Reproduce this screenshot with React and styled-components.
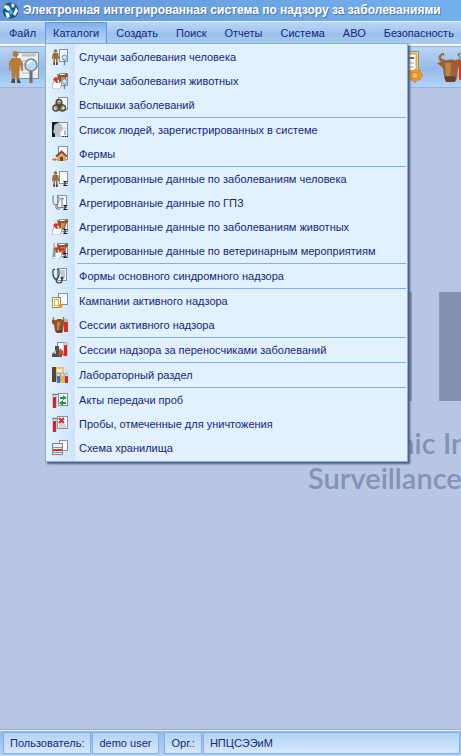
import React from 'react';
import styled, { createGlobalStyle } from 'styled-components';

const GlobalStyle = createGlobalStyle`
  * { box-sizing: border-box; }
  body { margin: 0; background: #b8c6e6; font-family: "Liberation Sans", Arial, sans-serif; font-size: 11px; color: #14287c; }
  button { font: inherit; color: inherit; margin: 0; }
`;

const Window = styled.div`
  display: flex;
  flex-direction: column;
  min-height: 100vh;
  overflow: hidden;
`;

const TitleBar = styled.header`
  display: flex;
  align-items: center;
  gap: 4px;
  height: 21px;
  padding: 0 0 1px 2px;
  background: linear-gradient(90deg, #6396d8, #74b0ee);
`;

const Title = styled.h1`
  margin: 0;
  font-size: 12px;
  line-height: 20px;
  font-weight: 700;
  color: #fff;
  white-space: nowrap;
  text-shadow: 1px 1px 0 #54749f;
`;

const MenuBar = styled.nav`
  display: flex;
  height: 23px;
  border-top: 1px solid #e6f2ff;
  background: linear-gradient(#b9d6f7, #a3c4ee 50%, #9abdec 50%, #aacdf4);
`;

const MenuSlot = styled.div`
  position: relative;
  flex: none;
`;

const MenuButton = styled.button`
  height: 22px;
  padding: ${(p) => (p.$open ? '0 7px' : '0 8px')};
  border: ${(p) => (p.$open ? '1px solid #6296d8' : '1px solid transparent')};
  background: ${(p) => (p.$open ? 'linear-gradient(#82b1ea, #b2d6fa)' : 'none')};
  line-height: 18px;
  white-space: nowrap;
`;

const Popup = styled.div`
  position: absolute;
  z-index: 2;
  top: 21px;
  left: 0;
  width: 363px;
  padding: 1px 1px 1px 0;
  border: 1px solid #84aee4;
  background: linear-gradient(90deg, #e5f2fe 0, #cde4fc 29px, #e2f0ff 29px);
  box-shadow: 2px 2px 2px #4d5c79;
`;

const MenuItem = styled.button`
  display: flex;
  align-items: center;
  gap: 11px;
  width: 100%;
  height: 24px;
  padding: 0 0 0 6px;
  border: 0;
  background: none;
  text-align: left;
  white-space: nowrap;
`;

const Divider = styled.hr`
  height: 1px;
  margin: 0 0 0 31px;
  border: 0;
  background: #84aee4;
`;

const Toolbar = styled.div`
  display: flex;
  justify-content: space-between;
  height: 44px;
  padding: 5px 0 4px 9px;
  border-top: 2px solid #f0f7ff;
  border-bottom: 1px solid #8fb5e6;
  background: linear-gradient(#8fb7ea 0, #8fb7ea 1px, #b8d5f6 1px, #9abdea 50%, #93b8e8 51%, #b3d4f7);
`;

const ToolGroup = styled.div`
  display: flex;
  gap: 9px;
  margin-right: -8px;
`;

const ToolButton = styled.button`
  width: 32px;
  height: 34px;
  padding: 0;
  border: 0;
  background: none;
`;

const Workspace = styled.main`
  flex: 1;
  overflow: hidden;
  padding: 173px 0 0 308px;
  background: #b8c6e6;
  color: #8592b3;
  white-space: nowrap;
`;

const Acronym = styled.div`
  margin-left: -18px;
  font: 700 152px/164px "Open Sans", sans-serif;
`;

const Tagline = styled.div`
  font: 600 29px/35px Lato, sans-serif;
`;

const StatusBar = styled.footer`
  display: flex;
  height: 27px;
  padding: 2px 0 2px 3px;
  border-top: 1px solid #8aaee0;
  background: linear-gradient(#e8f3ff 0, #e8f3ff 1px, #94bae9 1px, #b5d4f6);
`;

const StatusCell = styled.span`
  flex: ${(p) => (p.$fill ? 1 : 'none')};
  width: ${(p) => (p.$wide ? '67px' : 'auto')};
  margin-right: ${(p) => (p.$wide ? 5 : 1)}px;
  padding: 0 6px;
  border: 1px solid #84ade4;
  background: linear-gradient(#b4d1f4, #d6e8fb);
  line-height: 20px;
`;

const Svg = ({ size = 16, children }) => (
  <svg width={size} height={size} viewBox={`0 0 ${size} ${size}`} aria-hidden="true">{children}</svg>
);

const Page = ({ x = 7, y = 0, w = 8, h = 12 }) => (
  <rect x={x + 0.5} y={y + 0.5} width={w} height={h} fill="#f7fbff" stroke="#8294a2" />
);
const Person = () => (
  <g fill="#9c6c38">
    <circle cx="3.5" cy="2" r="1.8" />
    <path d="M1 4h5l1.4 6H6L5.6 7v8H4v-5H3v5H1.4V7L1 10H-.4z" />
    <path d="M1.4 13.5H3V16H1.4zM4 13.5h1.6V16H4z" fill="#493c35" />
  </g>
);
const Lens = () => (
  <g>
    <path d="M12.5 10.5V16" stroke="#718492" strokeWidth="1.4" />
    <circle cx="12.5" cy="8.5" r="2.6" fill="#c3e5fc" stroke="#7797af" />
  </g>
);
const Sigma = () => (
  <text x="11" y="15" fontSize="8" fontWeight="700" fontFamily="Liberation Sans, sans-serif" fill="#000">Σ</text>
);
const Animals = () => (
  <g>
    <path d="M5 1l3 1h4l3-2 1 3-2 2-1 5-4 1-3-5z" fill="#8f5526" />
    <path d="M9 4h4l-1 5H9z" fill="#cc8c4c" />
    <path d="M2 8l3 1 2 1 3-2-1 6-2 2H1l-1-3z" fill="#fff" stroke="#8f969f" strokeWidth=".7" />
    <path d="M1 7l1-2 2-1 3 2-2 1 1 2-2 1-1-2z" fill="#e62d20" />
  </g>
);
const Cow = () => (
  <g>
    <path d="M2 0Q0 2 3 4h7q3-2 1-4" fill="none" stroke="#a27646" strokeWidth="1.3" />
    <path d="M0 3h4l2-1h3l2 1h3v2l-2 2-1 7-1 2H5l-2-2-1-6-2-2z" fill="#905429" />
    <path d="M5 5h3l-1 8H5z" fill="#c58350" />
    <path d="M4 13h6v3H5z" fill="#6d4429" />
  </g>
);
const Tube = ({ x = 1, y = 2, color = '#d7242b', h = 14 }) => (
  <g>
    <rect x={x} y={y} width="3" height={h} rx="1" fill="#dfe6ec" stroke="#777f86" strokeWidth=".6" />
    <rect x={x} y={y + 3} width="3" height={h - 3} rx=".8" fill={color} />
  </g>
);
const Stethoscope = () => (
  <g fill="none" stroke="#223747" strokeWidth="1.2">
    <path d="M3 1L1 2v5q1 4 3 4t3-4V2L5 1M4 11q0 4 3 4t3-3v-1" />
    <circle cx="10" cy="10" r="1" fill="#fff" />
  </g>
);

const icons = {
  human: <><Page /><Person /><Lens /></>,
  animal: <><Page /><Animals /><Lens /></>,
  outbreak: (
    <>
      <Page x={6} y={0} w={9} h={12} />
      <circle cx="7" cy="9" r="4.5" fill="#b29868" />
      <g fill="none" stroke="#51483b" strokeWidth="1.5">
        <circle cx="7" cy="5.2" r="2.8" /><circle cx="4" cy="11" r="3" /><circle cx="10.5" cy="11" r="3" />
        <circle cx="7.3" cy="9" r="1.6" />
      </g>
    </>
  ),
  people: (
    <>
      <rect width="7" height="15" fill="#17191c" /><Page x={6} y={0} w={9} h={14} />
      <path d="M3 15v-3L1 10l1-3q-1-6 5-6 4 1 4 6l-3 4 1 4z" fill="#bdc2c7" />
      <path d="M13 9v4" stroke="#9dbed1" strokeWidth="2" /><circle cx="13" cy="6.5" r="2" fill="#cbe6f7" />
      <path d="M11 14.5h5" stroke="#17191c" strokeDasharray="1 1" />
    </>
  ),
  farm: (
    <>
      <Page x={6} y={0} w={9} h={13} />
      <path d="M5 9l4.5-4L14 9v6H5z" fill="#d9a765" />
      <path d="M4 10.5L9.5 5.5 15 10.5" fill="none" stroke="#8f4729" strokeWidth="1.8" />
      <path d="M8 11h3v4H8z" fill="#75401f" />
      <path d="M0 13.5h5M1.5 12v3M3.5 12v3M14 13.5h2" stroke="#cc8327" />
    </>
  ),
  humanSum: <><Page /><Person /><Sigma /></>,
  flu: (
    <>
      <Page x={5} y={0} w={9} h={12} />
      <path d="M2 1H1v6q1 4 3 3t3-4V2H5M4 10v3q2 3 5-1" fill="none" stroke="#69747d" />
      <path d="M10 4v9M8 4l2-1 2 1" stroke="#69747d" fill="none" /><Sigma />
    </>
  ),
  animalSum: <><Page /><Animals /><Sigma /></>,
  vet: (
    <>
      <Page x={5} y={0} w={10} h={13} /><Animals />
      <path d="M2 0v6" stroke="#8899a1" /><rect x="1" y="6" width="2.5" height="8" fill="#69ad98" />
      <path d="M7 8l4-2 2 3-2 3" fill="none" stroke="#d82621" strokeWidth="1.8" /><Sigma />
    </>
  ),
  syndrome: <><Page x={5} y={0} w={9} h={12} /><path d="M8 3h5M8 5h5M9 7h4M10 9h3" stroke="#8d9aa4" /><Stethoscope /></>,
  campaign: (
    <>
      <Page x={6} y={0} w={9} h={11} />
      <rect x=".5" y="4.5" width="8" height="10" fill="#fff" stroke="#a1874a" />
      <rect x="2.5" y="6.5" width="4" height="6" fill="#fff" stroke="#e8ac21" />
      <circle cx="8.5" cy="13" r="2" fill="#e49a30" />
    </>
  ),
  session: <><Cow /><path d="M12 5h4v10h-4z" fill="#dc3025" /><path d="M12 2h4v3h-4z" fill="#abb8b7" /></>,
  vector: (
    <>
      <Page x={5} y={0} w={8} h={12} />
      <path d="M3 4h4v5l3 2v4H0v-3l3-3z" fill="#4a5155" /><path d="M1 11l3-3v4z" fill="#b9c4c9" />
      <path d="M8 6l3 3 1 5-3-2-2 3V9z" fill="#e34b20" /><Tube x={12} y={0} h={14} />
    </>
  ),
  lab: (
    <>
      <rect width="4" height="15" fill="#59452f" /><path d="M4 0h8v13H4z" fill="#edc077" /><path d="M5 2h5v3H5z" fill="#fff3d8" />
      <Tube x={5} y={6} h={10} color="#2d72c7" /><Tube x={9} y={6} h={10} color="#edbd22" /><Tube x={13} y={6} h={10} />
    </>
  ),
  transfer: (
    <>
      <Page x={6} y={1} w={9} h={12} /><Tube x={1} />
      <path d="M0 2.5h6" stroke="#777" />
      <path d="M8 5h3V3l4 3-4 2V7H8zM14 10h-3V8l-4 3 4 3v-2h3z" fill="#189d3d" />
    </>
  ),
  destroy: (
    <>
      <Page x={5} y={0} w={10} h={12} /><Tube x={1} /><path d="M0 2.5h6" stroke="#777" />
      <path d="M7 2l5 5M12 2L7 7" stroke="#e52222" strokeWidth="2" /><path d="M7 9h7M7 11h7" stroke="#a8b0b7" />
    </>
  ),
  storage: (
    <>
      <Page x={7} y={0} w={8} h={10} /><rect x=".5" y="3.5" width="10" height="11" fill="#e9edf0" stroke="#7d868d" />
      <path d="M1 7.5h9M1 12.5h9" stroke="#8d969c" /><path d="M1 9h9v2H1z" fill="#d8323b" />
    </>
  ),
};

const groups = [
  [['human', 'Случаи заболевания человека'], ['animal', 'Случаи заболевания животных'], ['outbreak', 'Вспышки заболеваний']],
  [['people', 'Список людей, зарегистрированных в системе'], ['farm', 'Фермы']],
  [['humanSum', 'Агрегированные данные по заболеваниям человека'], ['flu', 'Агрегировнаные данные по ГПЗ'], ['animalSum', 'Агрегированные данные по заболеваниям животных'], ['vet', 'Агрегированные данные по ветеринарным мероприятиям']],
  [['syndrome', 'Формы основного синдромного надзора']],
  [['campaign', 'Кампании активного надзора'], ['session', 'Сессии активного надзора']],
  [['vector', 'Сессии надзора за переносчиками заболеваний']],
  [['lab', 'Лабораторный раздел']],
  [['transfer', 'Акты передачи проб'], ['destroy', 'Пробы, отмеченные для уничтожения'], ['storage', 'Схема хранилища']],
];

const menus = ['Файл', 'Каталоги', 'Создать', 'Поиск', 'Отчеты', 'Система', 'АВО', 'Безопасность'];

const CatalogMenu = () => (
  <Popup role="menu">
    {groups.map((items, i) => (
      <React.Fragment key={i}>
        {i > 0 && <Divider />}
        {items.map(([icon, label]) => (
          <MenuItem key={icon} role="menuitem"><Svg>{icons[icon]}</Svg>{label}</MenuItem>
        ))}
      </React.Fragment>
    ))}
  </Popup>
);

const AppLogo = () => (
  <Svg size={17}>
    <circle cx="8.5" cy="8.5" r="8" fill="#1b5689" />
    <path d="M3 3l4 1 2 4-3 1-3-3-2 1zM10 1l3 2-2 3-2-2zM14 5l2 4-3 5-2-2 2-4zM3 10l4 1 1 4-3 1z" fill="#e9faff" />
    <path d="M8 7l3 2-1 4-3-2z" fill="#49afd9" />
  </Svg>
);

const CaseSearch = () => (
  <Svg size={32}>
    <rect x="7.5" y="1.5" width="22" height="26" fill="#edf0f2" stroke="#7c919f" />
    <path d="M13 4h14" stroke="#bec4c9" strokeWidth="3" /><path d="M13 10h14M13 14h14M13 18h14M13 22h10" stroke="#b8bec3" />
    <g fill="#b77b3c">
      <circle cx="6.5" cy="3" r="3" />
      <path d="M3 7h8l3 5v8h-2l-1-7-1 18H8l-1-10-1 10H3L2 13l-1 7H0v-9z" />
    </g>
    <path d="M3 28h3v4H2zM8 28h2l2 4H8z" fill="#4c4948" />
    <path d="M22 19v13" stroke="#657079" strokeWidth="3" /><circle cx="22" cy="14" r="6" fill="#b9d9ef" stroke="#788794" strokeWidth="1.5" />
    <path d="M19 13q1-3 4-3" fill="none" stroke="#fff" strokeWidth="2" />
  </Svg>
);

const Certificate = () => (
  <Svg size={32}>
    <rect x="4.5" y=".5" width="18" height="27" fill="#fff" stroke="#8a8a83" /><rect x="6.5" y="2.5" width="14" height="23" fill="none" stroke="#e6aa22" strokeWidth="2" />
    <path d="M10 7h8" stroke="#666" strokeWidth="2" /><path d="M10 12h8M10 16h8M10 20h8" stroke="#aaa" />
    <path d="M19 18l2 2 3-1 1 3 2 2-2 2-1 3-3 0-2 3-2-3-3 0-1-3-2-2 2-2 1-3 3 1z" fill="#ed9827" stroke="#c6771a" strokeWidth=".6" />
    <circle cx="19" cy="24.5" r="3" fill="#ffc267" stroke="#d98318" />
  </Svg>
);

const CattleTest = () => (
  <Svg size={32}>
    <path d="M7 3Q1 5 4 9l7 3h6l6-3q3-3-2-6" fill="none" stroke="#8a6b49" strokeWidth="3" />
    <path d="M6 4Q3 6 6 8M22 4q3 2 1 4" fill="none" stroke="#ead3a6" />
    <path d="M0 12l7-2q7-3 13 0l6 1-1 3-4 3-1 9-1 4H9l-2-5-1-8z" fill="#9b5f32" />
    <path d="M8 12h6l-1 16-4-3z" fill="#bd824a" /><path d="M7 26q6-2 12 0l-1 5H9z" fill="#65412e" />
    <rect x="22" y="10" width="7" height="19" rx="1" fill="#e33522" /><rect x="23" y="2" width="6" height="8" fill="#9ab5b1" />
  </Svg>
);

export default function App() {
  return (
    <Window>
      <GlobalStyle />
      <TitleBar><AppLogo /><Title>Электронная интегрированная система по надзору за заболеваниями</Title></TitleBar>
      <MenuBar>
        {menus.map((label) => {
          const open = label === 'Каталоги';
          return (
            <MenuSlot key={label}>
              <MenuButton $open={open} aria-haspopup="menu" aria-expanded={open}>{label}</MenuButton>
              {open && <CatalogMenu />}
            </MenuSlot>
          );
        })}
      </MenuBar>
      <Toolbar>
        <ToolButton aria-label="Поиск случаев"><CaseSearch /></ToolButton>
        <ToolGroup>
          <ToolButton aria-label="Сертификат"><Certificate /></ToolButton>
          <ToolButton aria-label="Пробы животных"><CattleTest /></ToolButton>
        </ToolGroup>
      </Toolbar>
      <Workspace>
        <Acronym>EIDSS</Acronym>
        <Tagline>Electronic Integrated Disease</Tagline>
        <Tagline>Surveillance System</Tagline>
      </Workspace>
      <StatusBar>
        <StatusCell>Пользователь:</StatusCell>
        <StatusCell $wide>demo user</StatusCell>
        <StatusCell>Орг.:</StatusCell>
        <StatusCell $fill>НПЦСЭЭиМ</StatusCell>
      </StatusBar>
    </Window>
  );
}
